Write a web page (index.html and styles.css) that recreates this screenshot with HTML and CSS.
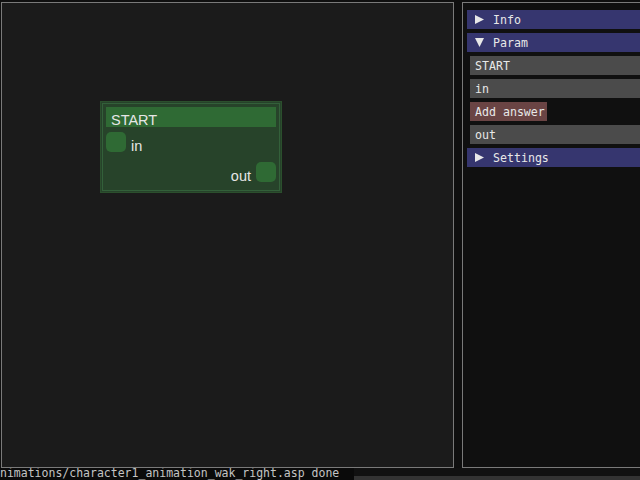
FILE: index.html
```html
<!DOCTYPE html>
<html>
<head>
<meta charset="utf-8">
<link rel="stylesheet" href="styles.css">
</head>
<body>
<div class="app">
  <div class="main">
    <div class="canvas">
      <div class="node" style="left:98px;top:98px;">
        <div class="node-title">START</div>
        <div class="pin-row in-row"><span class="pin"></span><span class="pin-label">in</span></div>
        <div class="pin-row out-row"><span class="pin-label">out</span><span class="pin"></span></div>
      </div>
    </div>
    <div class="side">
      <div class="header"><svg class="tri" width="9" height="9" viewBox="0 0 9 9"><polygon points="0,0 9,4.5 0,9" fill="#e8e8e8"/></svg><span>Info</span></div>
      <div class="header"><svg class="tri" width="9" height="9" viewBox="0 0 9 9"><polygon points="0,0 9,0 4.5,9" fill="#e8e8e8"/></svg><span>Param</span></div>
      <div class="field">START</div>
      <div class="field">in</div>
      <div class="button">Add answer</div>
      <div class="field">out</div>
      <div class="header"><svg class="tri" width="9" height="9" viewBox="0 0 9 9"><polygon points="0,0 9,4.5 0,9" fill="#e8e8e8"/></svg><span>Settings</span></div>
    </div>
  </div>
  <div class="status">
    <div class="status-text">nimations/character1_animation_wak_right.asp done</div>
    <div class="status-rest"><div class="status-bar"></div></div>
  </div>
</div>
</body>
</html>
```
FILE: styles.css
```css
html, body {
  margin: 0;
  padding: 0;
  background: #0f0f0f;
  overflow: hidden;
  width: 640px;
  height: 480px;
}
.app {
  display: flex;
  flex-direction: column;
  width: 640px;
  height: 480px;
}
.main {
  display: flex;
  height: 468px;
  padding: 2px 0 0 1px;
  box-sizing: border-box;
  gap: 8px;
}
.canvas {
  position: relative;
  width: 453px;
  height: 466px;
  box-sizing: border-box;
  border: 1px solid #7a7a7a;
  background: #1b1b1b;
  flex: none;
}
.node {
  position: absolute;
  width: 182px;
  height: 92px;
  box-sizing: border-box;
  border: 1px solid #2b4f2d;
  box-shadow: inset 0 0 0 1px #26422a, inset 0 0 0 2px #33603a;
  background: #27432a;
  padding: 5px;
  display: flex;
  flex-direction: column;
  font-family: "Liberation Sans", Arial, sans-serif;
  color: #e6e6e6;
}
.node-title {
  height: 20px;
  background: #2f6a34;
  font-size: 14.5px;
  line-height: 20px;
  padding-left: 5px;
  padding-top: 3px;
  box-sizing: border-box;
}
.pin-row {
  display: flex;
  align-items: center;
  height: 20px;
  gap: 5px;
  font-size: 14.5px;
}
.in-row { margin-top: 5px; }
.out-row { margin-top: 10px; justify-content: flex-end; }
.pin-label { line-height: 20px; padding-top: 8px; }
.pin {
  width: 20px;
  height: 20px;
  border-radius: 5px;
  background: #2f6a34;
  flex: none;
}
.side {
  width: 200px;
  height: 466px;
  box-sizing: border-box;
  border: 1px solid #7a7a7a;
  border-right: none;
  background: #101010;
  padding: 7px 0 0 4px;
  display: flex;
  flex-direction: column;
  gap: 4px;
  flex: none;
  font-family: "DejaVu Sans Mono", "Liberation Mono", monospace;
  font-size: 11.6px;
  color: #e8e8e8;
}
.header {
  height: 19px;
  background: #36366f;
  display: flex;
  align-items: center;
  padding-left: 8px;
  gap: 9px;
}
.tri { flex: none; }
.field {
  height: 19px;
  margin-left: 3px;
  background: #4b4b4b;
  line-height: 20px;
  padding-left: 5px;
}
.button {
  align-self: flex-start;
  height: 19px;
  margin-left: 3px;
  background: #6a4444;
  line-height: 20px;
  padding: 0 2px 0 5px;
}
.status {
  display: flex;
  height: 12px;
  font-family: "DejaVu Sans Mono", "Liberation Mono", monospace;
  font-size: 11.5px;
  color: #c4c4c4;
}
.status-text {
  width: 354px;
  height: 12px;
  background: #0a0a0a;
  line-height: 10px;
  white-space: nowrap;
  overflow: hidden;
  flex: none;
}
.status-rest {
  flex: 1;
  display: flex;
  flex-direction: column;
  justify-content: flex-end;
  background: #111111;
}
.status-bar {
  height: 4px;
  background: #333333;
}
```
